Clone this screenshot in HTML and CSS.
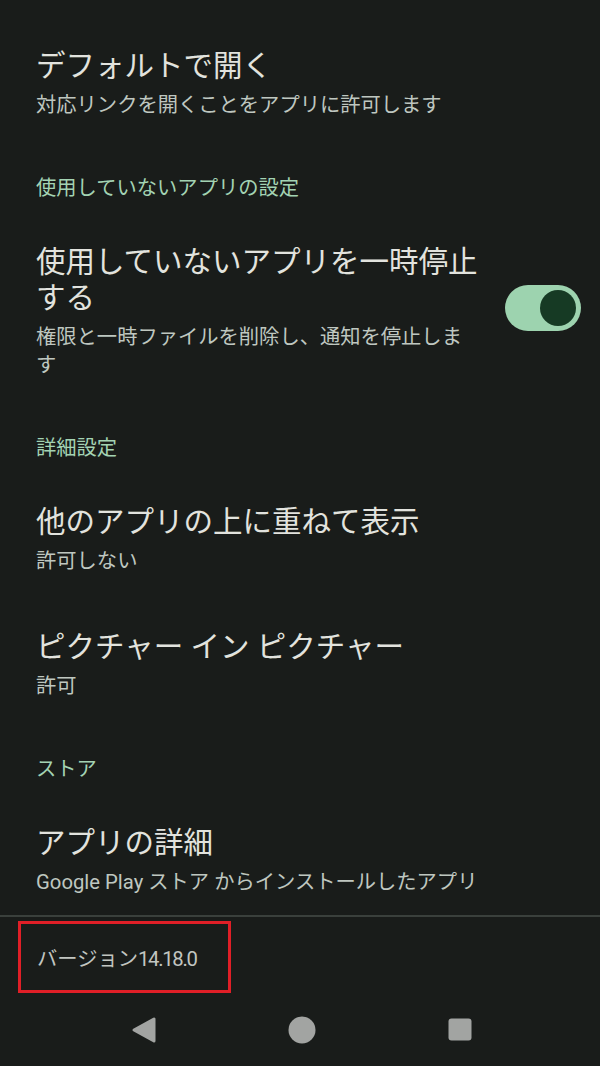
FILE: index.html
```html
<!DOCTYPE html>
<html lang="ja">
<head>
<meta charset="utf-8">
<title>アプリ情報</title>
<link rel="stylesheet" href="styles.css">
</head>
<body>
<div class="screen">
  <div class="list">
    <div class="pref">
      <div class="pref-text">
        <div class="title">デフォルトで開く</div>
        <div class="summary">対応リンクを開くことをアプリに許可します</div>
      </div>
    </div>

    <div class="category">使用していないアプリの設定</div>

    <div class="pref">
      <div class="pref-text">
        <div class="title">使用していないアプリを一時停止する</div>
        <div class="summary">権限と一時ファイルを削除し、通知を停止します</div>
      </div>
      <div class="switch"><span class="thumb"></span></div>
    </div>

    <div class="category">詳細設定</div>

    <div class="pref">
      <div class="pref-text">
        <div class="title">他のアプリの上に重ねて表示</div>
        <div class="summary">許可しない</div>
      </div>
    </div>

    <div class="pref">
      <div class="pref-text">
        <div class="title">ピクチャー イン ピクチャー</div>
        <div class="summary">許可</div>
      </div>
    </div>

    <div class="category">ストア</div>

    <div class="pref pref-last">
      <div class="pref-text">
        <div class="title">アプリの詳細</div>
        <div class="summary">Google Play ストア からインストールしたアプリ</div>
      </div>
    </div>
  </div>

  <div class="divider"></div>

  <div class="footer">
    <div class="version">バージョン<span class="num">14.18.0</span></div>
  </div>

  <nav class="navbar">
    <svg class="nav-icon" width="26" height="28" viewBox="0 0 26 28">
      <polygon points="3,14 23,3 23,25" fill="#a2a4a2" stroke="#a2a4a2" stroke-width="3" stroke-linejoin="round"/>
    </svg>
    <svg class="nav-icon" width="28" height="28" viewBox="0 0 28 28">
      <circle cx="14" cy="14" r="13.5" fill="#a2a4a2"/>
    </svg>
    <svg class="nav-icon" width="24" height="23" viewBox="0 0 24 23">
      <rect x="0.5" y="0.5" width="23" height="22" rx="3" fill="#a2a4a2"/>
    </svg>
  </nav>
</div>
</body>
</html>
```

FILE: styles.css
```css
html, body {
  margin: 0;
  padding: 0;
  background: #191c1a;
}

.screen {
  width: 600px;
  height: 1066px;
  overflow: hidden;
  background: #191c1a;
  font-family: "Roboto", "Noto Sans CJK JP", sans-serif;
  font-weight: 400;
}

.list {
  padding-top: 21px;
}

.pref {
  display: flex;
  align-items: center;
  padding: 27px 19px 27px 36px;
}

.pref-last {
  padding-bottom: 19px;
}

.pref-text {
  flex: 0 0 444px;
}

.title {
  font-size: 29.5px;
  line-height: 36px;
  color: #e2e3de;
}

.summary {
  margin-top: 7px;
  font-size: 20.3px;
  line-height: 28px;
  color: #bfc7c0;
}

.category {
  padding: 28px 36px 15px 36px;
  font-size: 20.3px;
  line-height: 28px;
  color: #a3d3b3;
}

.switch {
  margin-left: auto;
  margin-bottom: 8px;
  width: 76px;
  height: 46px;
  box-sizing: border-box;
  padding: 5px;
  border-radius: 23px;
  background: #9dd3af;
  display: flex;
  justify-content: flex-end;
  align-items: center;
}

.thumb {
  width: 36px;
  height: 36px;
  border-radius: 50%;
  background: #163a24;
}

.divider {
  height: 2px;
  background: #3a403c;
}

.footer {
  padding: 4px 0 0 18px;
}

.version {
  width: 213px;
  box-sizing: border-box;
  border: 3px solid #e01f27;
  padding: 21px 0 17px 16px;
  font-size: 20.3px;
  line-height: 28px;
  color: #c2c6c1;
}

.num {
  letter-spacing: -1.3px;
}

.navbar {
  height: 73px;
  box-sizing: border-box;
  padding-left: 4px;
  display: grid;
  grid-template-columns: repeat(3, 158px);
  justify-content: center;
  align-items: center;
  justify-items: center;
}

.nav-icon {
  display: block;
}
```
